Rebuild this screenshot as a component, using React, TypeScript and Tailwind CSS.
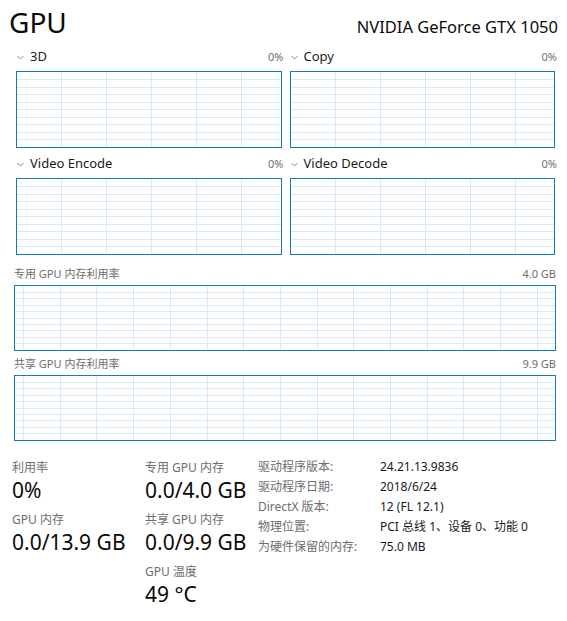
import React from "react";

const GRID_COLOR = "#d9eaf4";

type GridProps = {
  step: number;
  offset: number;
};

const ChartGrid: React.FC<GridProps> = ({ step, offset }) => {
  const cols = Array.from({ length: 20 }, (_, i) => offset + i * step);
  const rows = [1, 2, 3, 4, 5, 6, 7, 8, 9];
  return (
    <svg className="block h-full w-full" shapeRendering="crispEdges">
      {rows.map((r) => (
        <line
          key={"r" + r}
          x1="0"
          x2="100%"
          y1={`${r * 10}%`}
          y2={`${r * 10}%`}
          stroke={GRID_COLOR}
          strokeWidth={1}
        />
      ))}
      {cols.map((x) => (
        <line
          key={"c" + x}
          x1={Math.round(x) + 0.5}
          x2={Math.round(x) + 0.5}
          y1="0"
          y2="100%"
          stroke={GRID_COLOR}
          strokeWidth={1}
        />
      ))}
    </svg>
  );
};

const Chevron: React.FC = () => (
  <svg width="7" height="5" viewBox="0 0 7 5" className="mt-[1px] ml-[1px]">
    <polyline
      points="0.5,1 3.5,4 6.5,1"
      fill="none"
      stroke="#8a8a8a"
      strokeWidth={1}
    />
  </svg>
);

const EngineChart: React.FC<{ name: string; value: string }> = ({
  name,
  value,
}) => (
  <div className="flex flex-col">
    <div className="-mr-[2px] flex h-[20px] items-center justify-between">
      <div className="flex items-center gap-[6px]">
        <Chevron />
        <span className="text-[13px] text-[#1a1a1a]">{name}</span>
      </div>
      <span className="text-[11px] text-[#707070]">{value}</span>
    </div>
    <div className="mt-[4px] h-[77px] overflow-hidden border border-[#117dbb]">
      <ChartGrid step={45} offset={44} />
    </div>
  </div>
);

const MemoryChart: React.FC<{ name: string; value: string }> = ({
  name,
  value,
}) => (
  <div className="flex flex-col">
    <div className="flex h-[16px] items-center justify-between text-[11px] text-[#6d6d6d]">
      <span>{name}</span>
      <span>{value}</span>
    </div>
    <div className="mt-[3px] h-[66px] overflow-hidden border border-[#117dbb]">
      <ChartGrid step={36.7} offset={8} />
    </div>
  </div>
);

const Stat: React.FC<{ label: string; value: string }> = ({
  label,
  value,
}) => (
  <div className="flex flex-col">
    <div className="h-[16px] text-[12px] leading-[16px] text-[#6d6d6d]">
      {label}
    </div>
    <div className="h-[28px] text-[21px] leading-[28px] text-[#0a0a0a]">
      {value}
    </div>
  </div>
);

const details = [
  ["驱动程序版本:", "24.21.13.9836"],
  ["驱动程序日期:", "2018/6/24"],
  ["DirectX 版本:", "12 (FL 12.1)"],
  ["物理位置:", "PCI 总线 1、设备 0、功能 0"],
  ["为硬件保留的内存:", "75.0 MB"],
];

const App: React.FC = () => {
  return (
    <div className="h-[621px] w-[567px] overflow-hidden bg-white font-['Noto_Sans','Noto_Sans_CJK_SC',sans-serif]">
      <div className="flex items-baseline justify-between pt-[4px] pr-[9px] pl-[9px]">
        <h1 className="text-[28px] leading-[36px] text-[#0a0a0a]">GPU</h1>
        <div className="text-[16.5px] text-[#0a0a0a]">NVIDIA GeForce GTX 1050</div>
      </div>

      <div className="mt-[7px] ml-[16px] grid w-[539px] grid-cols-2 gap-x-[8px] gap-y-[6px]">
        <EngineChart name="3D" value="0%" />
        <EngineChart name="Copy" value="0%" />
        <EngineChart name="Video Encode" value="0%" />
        <EngineChart name="Video Decode" value="0%" />
      </div>

      <div className="mt-[11px] ml-[14px] flex w-[542px] flex-col gap-[5px]">
        <MemoryChart name="专用 GPU 内存利用率" value="4.0 GB" />
        <MemoryChart name="共享 GPU 内存利用率" value="9.9 GB" />
      </div>

      <div className="mt-[16px] flex">
        <div className="ml-[12px] flex w-[133px] flex-col gap-[8px] pt-[3px]">
          <Stat label="利用率" value="0%" />
          <Stat label="GPU 内存" value="0.0/13.9 GB" />
        </div>
        <div className="flex w-[113px] flex-col gap-[8px] pt-[3px]">
          <Stat label="专用 GPU 内存" value="0.0/4.0 GB" />
          <Stat label="共享 GPU 内存" value="0.0/9.9 GB" />
          <Stat label="GPU 温度" value="49 °C" />
        </div>
        <div className="flex flex-col">
          {details.map(([label, value]) => (
            <div key={label} className="flex h-[20px] items-center text-[12px]">
              <span className="w-[122px] text-[#6d6d6d]">{label}</span>
              <span className="text-[#1a1a1a]">{value}</span>
            </div>
          ))}
        </div>
      </div>
    </div>
  );
};

export default App;
